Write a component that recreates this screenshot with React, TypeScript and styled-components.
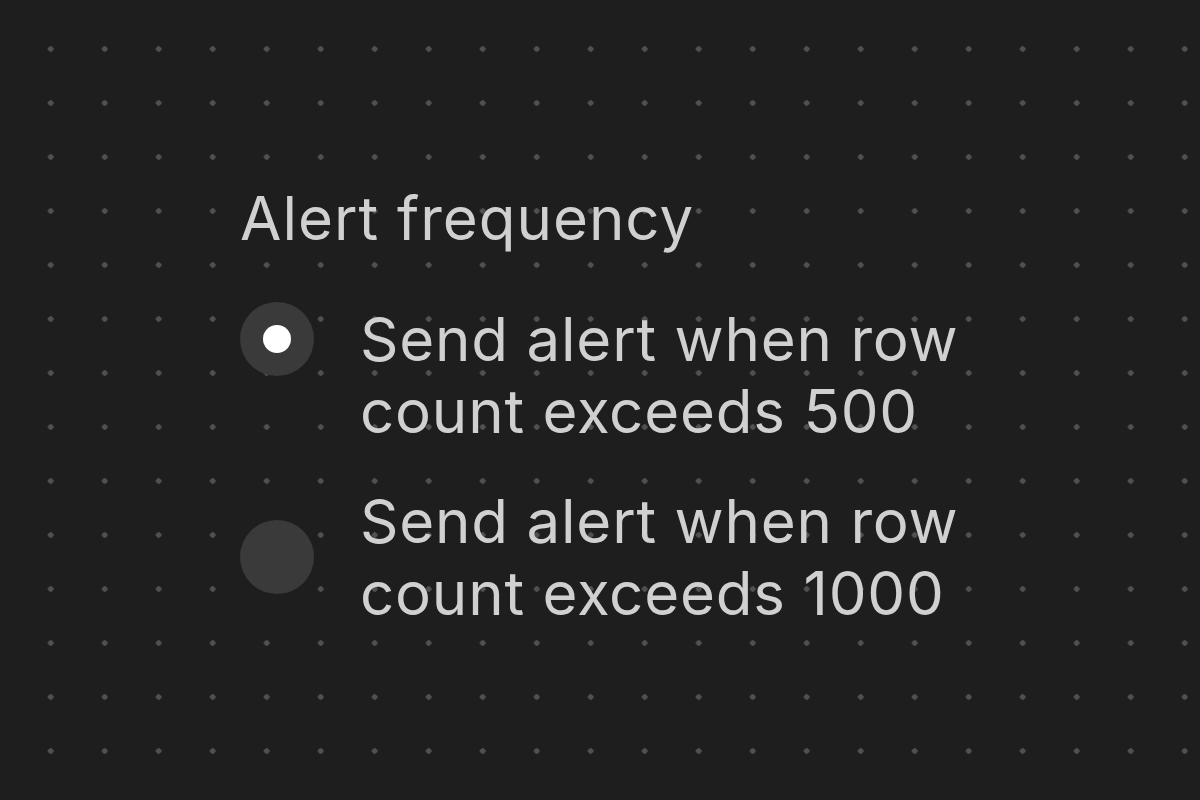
import React, { useState } from "react";
import styled, { createGlobalStyle } from "styled-components";

const GlobalStyle = createGlobalStyle`
  html, body {
    margin: 0;
    padding: 0;
    background: #1e1e1e;
  }
  body {
    font-family: Inter, "Noto Sans", "Liberation Sans", sans-serif;
  }
`;

const options = [
  { id: "500", label: "Send alert when row count exceeds 500", align: "flex-start" },
  { id: "1000", label: "Send alert when row count exceeds 1000", align: "center" },
];

function App() {
  const [selected, setSelected] = useState("500");

  return (
    <Canvas>
      <GlobalStyle />
      <Group role="radiogroup" aria-label="Alert frequency">
        <Title>Alert frequency</Title>
        <List>
          {options.map((o) => (
            <Option key={o.id} $align={o.align} onClick={() => setSelected(o.id)}>
              <Radio $checked={selected === o.id} role="radio" aria-checked={selected === o.id} />
              <Label>{o.label}</Label>
            </Option>
          ))}
        </List>
      </Group>
    </Canvas>
  );
}

export default App;

const Canvas = styled.div`
  width: 1200px;
  height: 800px;
  box-sizing: border-box;
  padding: 182px 0 0 240px;
  background-color: #1e1e1e;
  background-image: radial-gradient(circle, #505050 2.5px, transparent 3px);
  background-size: 54px 54px;
  background-position: 23.7px 22px;
`;

const Group = styled.div`
  display: flex;
  flex-direction: column;
  width: 760px;
`;

const Title = styled.div`
  font-size: 60px;
  line-height: 72px;
  letter-spacing: 1px;
  color: #d0d0d0;
`;

const List = styled.div`
  display: flex;
  flex-direction: column;
  gap: 38px;
  margin-top: 49px;
`;

const Option = styled.label<{ $align: string }>`
  display: flex;
  align-items: ${(p) => p.$align};
  gap: 46px;
  cursor: pointer;
`;

const Radio = styled.span<{ $checked: boolean }>`
  flex: none;
  width: 74px;
  height: 74px;
  border-radius: 50%;
  background: #3a3a3a;
  display: flex;
  align-items: center;
  justify-content: center;
  margin-top: ${(p) => (p.$checked ? "-1px" : "0")};

  &::after {
    content: "";
    width: 28px;
    height: 28px;
    border-radius: 50%;
    background: #ffffff;
    display: ${(p) => (p.$checked ? "block" : "none")};
  }
`;

const Label = styled.span`
  font-size: 60px;
  line-height: 72px;
  letter-spacing: 0.8px;
  color: #d0d0d0;
  width: 620px;
`;
